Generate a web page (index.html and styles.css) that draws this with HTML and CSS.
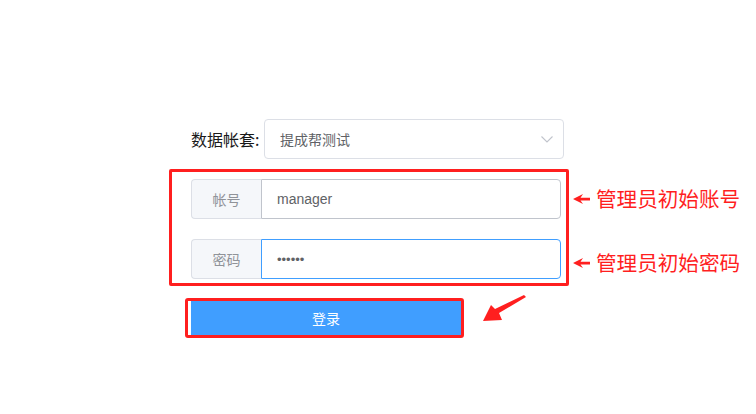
FILE: index.html
```html
<!DOCTYPE html>
<html lang="zh-CN">
<head>
<meta charset="utf-8">
<title>登录</title>
<link rel="stylesheet" href="styles.css">
</head>
<body>
<div class="page">
  <div class="form">
    <div class="row">
      <label class="row-label">数据帐套:</label>
      <div class="select">
        <span class="select-text">提成帮测试</span>
        <svg class="chevron" width="12" height="7" viewBox="0 0 12 7"><path d="M0.5 0.5 L6 6 L11.5 0.5" fill="none" stroke="#c0c4cc" stroke-width="1.1"/></svg>
      </div>
    </div>
    <div class="mark-box">
      <div class="group">
        <div class="prepend">帐号</div>
        <div class="input">manager</div>
      </div>
      <div class="group">
        <div class="prepend">密码</div>
        <div class="input input-focus"><span class="dots">••••••</span></div>
      </div>
    </div>
    <div class="btn-box">
      <button class="btn">登录</button>
    </div>
  </div>

  <div class="note note-1">
    <svg class="small-arrow" width="17" height="10" viewBox="0 0 17 10"><polygon points="0,5 10,0 7.5,3.8 17,3.8 17,6.4 7.5,6.4 10,10" fill="#ff1f1f"/></svg>
    <span class="note-text">管理员初始账号</span>
  </div>
  <div class="note note-2">
    <svg class="small-arrow" width="17" height="10" viewBox="0 0 17 10"><polygon points="0,5 10,0 7.5,3.8 17,3.8 17,6.4 7.5,6.4 10,10" fill="#ff1f1f"/></svg>
    <span class="note-text">管理员初始密码</span>
  </div>
  <svg class="big-arrow" width="50" height="32" viewBox="480 292 50 32">
    <polygon points="483,321 491,305 495,309 524,295 526,297 499,313 502,320" fill="#ff1f1f"/>
  </svg>
</div>
</body>
</html>
```
FILE: styles.css
```css
html, body {
  margin: 0;
  padding: 0;
  background: #ffffff;
}
body {
  font-family: "Liberation Sans", "Noto Sans CJK SC", sans-serif;
  width: 756px;
  height: 414px;
  overflow: hidden;
}
.page {
  position: relative;
  width: 756px;
  height: 414px;
}
.form {
  padding-top: 119px;
  margin-left: 169px;
  width: 400px;
}
.row {
  display: flex;
  align-items: center;
  margin-left: 22px;
}
.row-label {
  width: 73px;
  font-size: 16px;
  color: #1a1a1a;
  font-family: "Noto Sans CJK SC", sans-serif;
  line-height: 20px;
}
.select {
  box-sizing: border-box;
  width: 300px;
  height: 40px;
  border: 1px solid #dcdfe6;
  border-radius: 4px;
  display: flex;
  align-items: center;
  justify-content: space-between;
  padding: 0 10px 0 15px;
}
.select-text {
  font-size: 14px;
  color: #606266;
  font-family: "Noto Sans CJK SC", sans-serif;
}
.chevron {
  display: block;
  margin-top: 1px;
}
.mark-box {
  box-sizing: border-box;
  margin-top: 10px;
  width: 400px;
  height: 117px;
  border: 3px solid #ff1f1f;
  border-radius: 2px;
  padding: 7px 0 0 19px;
  display: flex;
  flex-direction: column;
  gap: 20px;
}
.group {
  display: flex;
  width: 370px;
  height: 40px;
}
.prepend {
  box-sizing: border-box;
  width: 70px;
  height: 40px;
  background: #f5f7fa;
  border: 1px solid #dcdfe6;
  border-right: none;
  border-radius: 4px 0 0 4px;
  color: #909399;
  font-size: 14px;
  font-family: "Noto Sans CJK SC", sans-serif;
  display: flex;
  align-items: center;
  justify-content: center;
}
.input {
  box-sizing: border-box;
  flex: 1;
  height: 40px;
  border: 1px solid #c0c4cc;
  border-radius: 0 4px 4px 0;
  padding-left: 15px;
  font-size: 14px;
  color: #606266;
  display: flex;
  align-items: center;
}
.input-focus {
  border-color: #409eff;
}
.dots {
  font-size: 13px;
  letter-spacing: 0;
  color: #606266;
}
.btn-box {
  box-sizing: border-box;
  margin-top: 12px;
  margin-left: 16px;
  width: 279px;
  height: 40px;
  border: 3px solid #ff1f1f;
  border-radius: 3px;
  padding-left: 3px;
  display: flex;
}
.btn {
  flex: 1;
  height: 34px;
  border: none;
  margin: 0;
  padding: 0;
  background: #409eff;
  color: #ffffff;
  font-size: 14px;
  font-family: "Noto Sans CJK SC", sans-serif;
}
.note {
  position: absolute;
  display: flex;
  align-items: center;
  gap: 6px;
}
.note-1 {
  left: 573px;
  top: 187px;
}
.note-2 {
  left: 573px;
  top: 251px;
}
.small-arrow {
  display: block;
  margin-top: 1px;
}
.note-text {
  font-size: 20.6px;
  line-height: 22px;
  color: #ff1f1f;
  font-family: "Noto Sans CJK SC", sans-serif;
}
.big-arrow {
  position: absolute;
  left: 480px;
  top: 292px;
}
```
